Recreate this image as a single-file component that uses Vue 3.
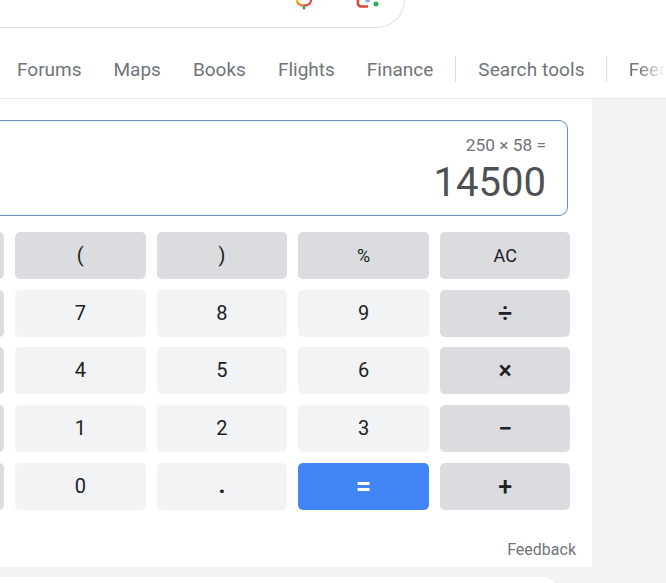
<script setup>
const tabs = ['Forums', 'Maps', 'Books', 'Flights', 'Finance']

const keys = [
  { t: 'x!', c: 'dark' }, { t: '(', c: 'dark' }, { t: ')', c: 'dark' }, { t: '%', c: 'dark small' }, { t: 'AC', c: 'dark small' },
  { t: 'ln', c: 'dark' }, { t: '7' }, { t: '8' }, { t: '9' }, { t: '÷', c: 'dark op' },
  { t: 'log', c: 'dark' }, { t: '4' }, { t: '5' }, { t: '6' }, { t: '×', c: 'dark op' },
  { t: '√', c: 'dark' }, { t: '1' }, { t: '2' }, { t: '3' }, { t: '−', c: 'dark op' },
  { t: 'xʸ', c: 'dark' }, { t: '0' }, { t: '.', c: 'dot' }, { t: '=', c: 'blue' }, { t: '+', c: 'dark op' }
]
</script>

<template>
  <div class="page">
    <header class="top">
      <div class="searchbar">
        <svg class="ico-mic" width="24" height="24" viewBox="0 0 24 24" fill="none">
          <path d="M11 5.500c4 0 7-2 7-5.500" stroke="#ea4335" stroke-width="2.200"/>
          <path d="M4 0c0 3.500 3 5.500 7 5.500" stroke="#ea7b35" stroke-width="2.200"/>
          <path d="M4 0c0 1 .2 1.800.6 2.500" stroke="#fbbc04" stroke-width="2.200"/>
          <path d="M11 6v3.500" stroke="#34a853" stroke-width="2.600"/>
        </svg>
        <svg class="ico-lens" width="30" height="24" viewBox="0 0 30 24" fill="none">
          <path d="M3 0v3.500a3 3 0 0 0 3 3h7" stroke="#d9483b" stroke-width="2.600"/>
          <circle cx="12.500" cy="0" r="2.500" fill="#8ab0ee"/>
          <circle cx="21" cy="4" r="2.500" fill="#34a853"/>
        </svg>
      </div>
      <nav class="tabs">
        <a v-for="t in tabs" :key="t" class="tab">{{ t }}</a>
        <span class="sep first"></span>
        <a class="tab tools">Search tools</a>
        <span class="sep"></span>
        <a class="tab fade">Feedback</a>
      </nav>
    </header>

    <main class="body">
      <section class="calc">
        <div class="display">
          <div class="expr">250 × 58 =</div>
          <div class="result">14500</div>
        </div>
        <div class="keys">
          <button v-for="k in keys" :key="k.t" class="key" :class="k.c">{{ k.t }}</button>
        </div>
        <div class="feedback">Feedback</div>
      </section>
      <div class="next"></div>
    </main>
  </div>
</template>

<style>
body {
  background: #f1f3f4;
  overflow: hidden;
}
</style>

<style scoped>
.page {
  width: 666px;
  height: 583px;
  overflow: hidden;
  font-family: Roboto, "Liberation Sans", sans-serif;
}

.top {
  height: 98px;
  background: #fff;
  border-bottom: 1px solid #e8eaed;
  box-sizing: content-box;
  overflow: hidden;
}

.searchbar {
  position: relative;
  width: 404px;
  height: 27px;
  border: 1px solid #dfe1e5;
  border-width: 0 1px 1px 0;
  border-radius: 0 0 28px 0;
  box-sizing: content-box;
}

.ico-mic {
  position: absolute;
  left: 293px;
  top: 0;
}

.ico-lens {
  position: absolute;
  left: 355px;
  top: 0;
}

.tabs {
  display: flex;
  align-items: center;
  height: 28px;
  margin-top: 27px;
  padding-left: 17px;
  white-space: nowrap;
}

.tab {
  font-size: 19px;
  color: #70757a;
  margin-right: 32px;
}

.tab.tools {
  letter-spacing: 0.1px;
}

.sep {
  width: 1px;
  height: 26px;
  background: #dadce0;
  flex: none;
  margin: 0 22px 0 -11px;
}

.sep.first {
  margin-left: -10px;
}

.fade {
  -webkit-mask-image: linear-gradient(to right, #000 10px, transparent 36px);
  mask-image: linear-gradient(to right, #000 10px, transparent 36px);
}

.body {
  width: 592px;
}

.calc {
  background: #fff;
  height: 468px;
  padding-top: 21px;
  box-sizing: border-box;
  position: relative;
}

.display {
  margin-left: -20px;
  width: 588px;
  height: 96px;
  box-sizing: border-box;
  border: 1px solid #6a93b5;
  border-radius: 9px;
  box-shadow: inset 0 0 3px #dce9f5;
  padding: 15px 21px 0 0;
  text-align: right;
}

.expr {
  font-size: 17.3px;
  line-height: 18px;
  color: #70757a;
}

.result {
  font-size: 40px;
  line-height: 46px;
  margin-top: 6px;
  color: #4d5156;
}

.keys {
  display: grid;
  grid-template-columns: repeat(5, 130.5px);
  grid-auto-rows: 47px;
  column-gap: 11.17px;
  row-gap: 10.75px;
  margin: 15.9px 0 0 -126.67px;
}

.key {
  border: none;
  border-radius: 5px;
  padding: 0;
  background: #f1f3f4;
  color: #202124;
  font-family: inherit;
  font-size: 20px;
  line-height: 23px;
}

.key.dark {
  background: #dadce0;
}

.key.small {
  font-size: 18px;
}

.key.op {
  font-size: 25px;
  font-weight: 500;
}

.key.dot {
  font-size: 24px;
  font-weight: 700;
  padding-bottom: 2px;
}

.key.blue {
  background: #4285f4;
  color: #fff;
  font-size: 27px;
  font-weight: 700;
}

.feedback {
  position: absolute;
  right: 16px;
  bottom: 8px;
  font-size: 16px;
  color: #70757a;
}

.next {
  margin-top: 10px;
  width: 558px;
  height: 20px;
  background: #fff;
  border-radius: 0 16px 0 0;
}
</style>
